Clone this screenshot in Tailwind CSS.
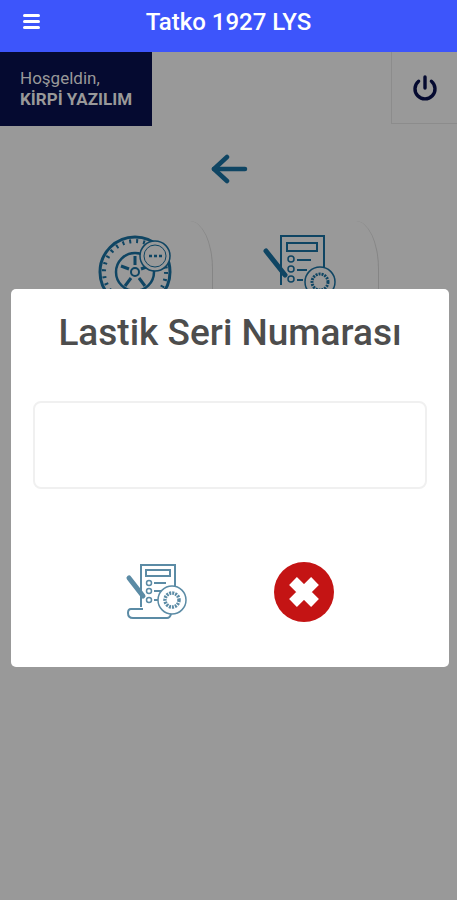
<!DOCTYPE html>
<html lang="en">
<head>
    <meta charset="UTF-8">
    <meta name="viewport" content="width=device-width, initial-scale=1.0">
    <title>Tatko 1927 LYS</title>
    <script src="https://cdn.jsdelivr.net/npm/@tailwindcss/browser@4"></script>
</head>
<body class="bg-[#999999] font-['Roboto',sans-serif]">
    <div class="relative w-[457px] h-[900px] overflow-hidden">

        <!-- Top bar -->
        <header class="h-[52px] bg-[#3d55fb] relative flex items-center justify-center">
            <div class="absolute left-[23px] top-[14px] w-[17px] flex flex-col gap-[3px]">
                <span class="h-[3px] bg-white rounded-sm"></span>
                <span class="h-[3px] bg-white rounded-sm"></span>
                <span class="h-[3px] bg-white rounded-sm"></span>
            </div>
            <h1 class="text-white text-[24px] font-medium leading-none -mt-[8px]">Tatko 1927 LYS</h1>
        </header>

        <!-- User row -->
        <div class="flex justify-between items-start">
            <div class="w-[152px] h-[74px] bg-[#050a30] pl-[20px] pt-[16px] text-[#999999] text-[17px] leading-[21px]">
                <div>Hoşgeldin,</div>
                <div class="font-bold">KİRPİ YAZILIM</div>
            </div>
            <div class="w-[66px] h-[72px] border-l border-b border-[#8c8c8c] flex items-center justify-center">
                <svg width="28" height="28" viewBox="0 0 28 28" fill="none" stroke="#050a30" stroke-width="3.4" stroke-linecap="round">
                    <path d="M14 3v11"/>
                    <path d="M7.6 7.2a10 10 0 1 0 12.8 0"/>
                </svg>
            </div>
        </div>

        <!-- Back arrow -->
        <div class="flex justify-center mt-[28px] pl-[1px]">
            <svg width="37" height="30" viewBox="0 0 37 30" fill="none" stroke="#0f4563" stroke-width="4.5" stroke-linecap="round" stroke-linejoin="round">
                <path d="M34 15H3"/>
                <path d="M16 3L3 15l13 12"/>
            </svg>
        </div>

        <!-- Menu cards behind the dialog -->
        <div class="flex pl-[98px] mt-[51px] gap-[91px]">
            <div class="relative w-[74px] h-[74px]">
                <svg width="75" height="75" viewBox="0 0 75 75" fill="none" stroke="#0f4563">
                    <circle cx="37" cy="37" r="35" stroke-width="3"/>
                    <circle cx="37" cy="37" r="31" stroke-width="4" stroke-dasharray="2 5"/>
                    <circle cx="37" cy="37" r="19" stroke-width="2.5"/>
                    <circle cx="37" cy="37" r="4" stroke-width="2"/>
                    <path d="M37 21v9M23 31l8 3M51 31l-8 3M27 51l6-8M47 51l-6-8" stroke-width="3"/>
                    <circle cx="57" cy="21" r="15" fill="#999999" stroke-width="1.5"/>
                    <circle cx="57" cy="21" r="11" stroke-width="1"/>
                    <path d="M51 21h3M56 21h3M61 21h3" stroke-width="2.5"/>
                </svg>
                <div class="absolute left-[92px] -top-[14px] w-[23px] h-[90px] border-r border-[#858585] rounded-tr-[23px_48px]"></div>
            </div>
            <div class="relative w-[76px] h-[74px]">
                <svg width="76" height="75" viewBox="0 0 76 75" fill="none" stroke="#0f4563">
                    <path d="M18 50V1h43v34" stroke-width="2"/>
                    <rect x="24" y="8" width="30" height="8" stroke-width="2"/>
                    <circle cx="28" cy="24" r="3" stroke-width="1.5"/>
                    <circle cx="28" cy="34" r="3" stroke-width="1.5"/>
                    <circle cx="28" cy="44" r="3" stroke-width="1.5"/>
                    <path d="M34 25h14M34 35h10M34 45h6" stroke-width="2"/>
                    <path d="M3 16l19 24" stroke-width="5" stroke-linecap="round"/>
                    <circle cx="57" cy="47" r="15" fill="#999999" stroke-width="1.5"/>
                    <circle cx="57" cy="47" r="8" stroke-width="3" stroke-dasharray="2 1"/>
                </svg>
                <div class="absolute left-[93px] -top-[14px] w-[23px] h-[90px] border-r border-[#858585] rounded-tr-[23px_48px]"></div>
            </div>
        </div>

        <!-- Dialog -->
        <div class="absolute left-[11px] top-[289px] w-[438px] h-[378px] bg-white rounded-[5px] px-[22px]">
            <h2 class="text-[#4d4d4d] text-[37px] font-medium leading-none text-center mt-[25px] whitespace-nowrap">Lastik Seri Numarası</h2>
            <input type="text" class="block w-[394px] h-[88px] mt-[50px] border-2 border-[#f0f0f0] rounded-[8px] bg-white outline-none">
            <div class="flex items-center mt-[73px] pl-[92px] gap-[85px]">
                <svg width="64" height="58" viewBox="0 0 64 58" fill="none" stroke="#5b8ba5">
                    <path d="M16 44V2h34v32" stroke-width="2"/>
                    <rect x="21" y="7" width="24" height="6" stroke-width="2"/>
                    <circle cx="24" cy="20" r="2.5" stroke-width="1.5"/>
                    <circle cx="24" cy="28" r="2.5" stroke-width="1.5"/>
                    <circle cx="24" cy="37" r="2.5" stroke-width="1.5"/>
                    <path d="M29 20h12M29 28h9M29 37h5" stroke-width="2"/>
                    <path d="M4 15l14 18" stroke-width="5" stroke-linecap="round"/>
                    <circle cx="47" cy="37" r="14" fill="#ffffff" stroke-width="1.5"/>
                    <circle cx="47" cy="37" r="7" stroke-width="3.5" stroke-dasharray="2 1"/>
                    <path d="M18 46H6q-3 0-3 4 0 5 5 5h34q3 0 4-4" stroke-width="2"/>
                </svg>
                <svg width="60" height="60" viewBox="0 0 60 60">
                    <circle cx="30" cy="30" r="30" fill="#c41414"/>
                    <path d="M19 19L41 41M41 19L19 41" stroke="#ffffff" stroke-width="11"/>
                </svg>
            </div>
        </div>

    </div>
</body>
</html>
